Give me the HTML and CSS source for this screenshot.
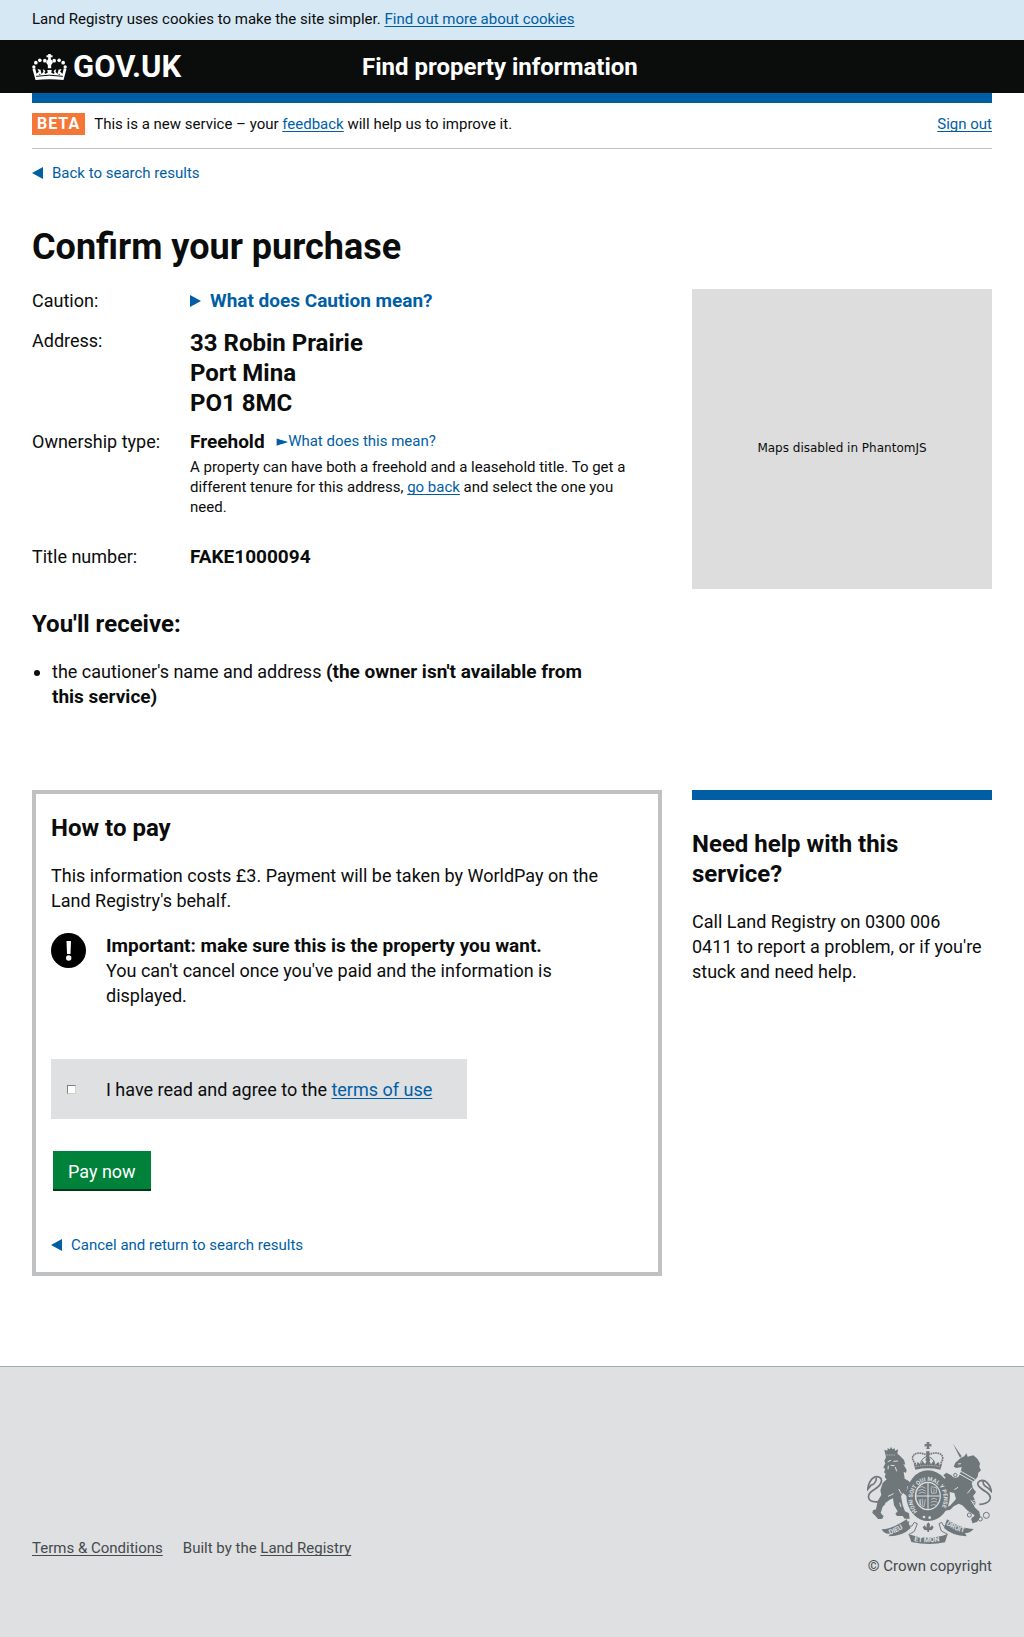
FILE: index.html
```html
<!DOCTYPE html>
<html lang="en">
<head>
<meta charset="utf-8">
<meta name="viewport" content="width=device-width, initial-scale=1">
<title>Confirm your purchase</title>
<link rel="stylesheet" href="styles.css">
</head>
<body>
<div class="cookie-bar">
  <p class="wrap">Land Registry uses cookies to make the site simpler. <a href="#cookies">Find out more about cookies</a></p>
</div>

<header class="site-header">
  <div class="wrap site-header-inner">
    <a class="logo" href="#home">
      <svg class="crown" viewBox="96 158 104 78" aria-hidden="true">
        <g fill="#fff">
          <path d="M144 158h8v4h5v6h-5v6q6 4 6 10l-5 7v10h-10v-10l-5-7q0-6 6-10v-6h-5v-6h5z"/>
          <circle cx="134" cy="178" r="5.500"/><circle cx="162" cy="178" r="5.500"/>
          <circle cx="119" cy="177" r="5.500"/><circle cx="177" cy="177" r="5.500"/>
          <circle cx="107" cy="184" r="5.500"/><circle cx="189" cy="184" r="5.500"/>
          <circle cx="101" cy="197" r="5"/><circle cx="195" cy="197" r="5"/>
          <path d="M97 203l8-2 4 16 7-6-4-8 9 2 3 13 6-7-2-7 5 2 5 10 5-2-2-8h14l-2 8 5 2 5-10 5-2-2 7 6 7 3-13 9-2-4 8 7 6 4-16 8 2-9 33q-42-5-84 0z"/>
        </g>
        <path d="M108 225q40-7 80 0" fill="none" stroke="#0b0c0c" stroke-width="3"/>
        <g fill="#0b0c0c"><circle cx="136" cy="214" r="3"/><circle cx="160" cy="214" r="3"/><circle cx="119" cy="219" r="2"/><circle cx="177" cy="219" r="2"/></g>
      </svg>
      <span>GOV.UK</span>
    </a>
    <a class="service-name" href="#service">Find property information</a>
  </div>
</header>

<main class="wrap">
  <div class="phase-banner">
    <p class="phase-text"><strong class="phase-tag">BETA</strong><span>This is a new service – your <a href="#feedback">feedback</a> will help us to improve it.</span></p>
    <a href="#signout">Sign out</a>
  </div>

  <a class="back-link" href="#results">Back to search results</a>

  <h1 class="title">Confirm your purchase</h1>

  <div class="columns">
    <div class="summary-column">
      <dl class="summary">
        <dt>Caution:</dt>
        <dd>
          <details>
            <summary class="caution-toggle">What does Caution mean?</summary>
          </details>
        </dd>
        <dt>Address:</dt>
        <dd class="address">33 Robin Prairie<br>Port Mina<br>PO1 8MC</dd>
        <dt>Ownership type:</dt>
        <dd>
          <div class="tenure">
            <strong>Freehold</strong>
            <details>
              <summary class="tenure-toggle"><span class="pointer">►</span>What does this mean?</summary>
            </details>
          </div>
          <p class="tenure-note">A property can have both a freehold and a leasehold title. To get a different tenure for this address, <a href="#back">go back</a> and select the one you need.</p>
        </dd>
        <dt>Title number:</dt>
        <dd><strong>FAKE1000094</strong></dd>
      </dl>

      <h2 class="heading">You'll receive:</h2>
      <ul class="receive">
        <li>the cautioner's name and address <strong>(the owner isn't available from this service)</strong></li>
      </ul>
    </div>
    <div class="map">Maps disabled in PhantomJS</div>
  </div>

  <div class="columns">
    <form class="payment">
      <h2 class="heading">How to pay</h2>
      <p class="cost">This information costs £3. Payment will be taken by WorldPay on the Land Registry's behalf.</p>
      <div class="notice">
        <svg class="notice-icon" viewBox="0 0 35 35" role="img" aria-label="Warning">
          <circle cx="17.500" cy="17.500" r="17.500" fill="#000"/>
          <path d="M15.500 8h4.500l-.5 13h-3.500z" fill="#fff"/>
          <circle cx="17.700" cy="25" r="2.700" fill="#fff"/>
        </svg>
        <p><strong>Important: make sure this is the property you want.</strong><br>You can't cancel once you've paid and the information is displayed.</p>
      </div>
      <div class="agree">
        <input class="agree-box" type="checkbox" id="terms">
        <label for="terms">I have read and agree to the <a href="#terms-of-use">terms of use</a></label>
      </div>
      <button class="pay" type="submit">Pay now</button>
      <a class="back-link" href="#results">Cancel and return to search results</a>
    </form>
    <aside class="help">
      <h2 class="heading">Need help with this service?</h2>
      <p class="help-text">Call Land Registry on 0300 006 0411 to report a problem, or if you're stuck and need help.</p>
    </aside>
  </div>
</main>

<footer class="site-footer">
  <div class="wrap site-footer-inner">
    <ul class="footer-links">
      <li><a href="#conditions">Terms &amp; Conditions</a></li>
      <li>Built by the <a href="#land-registry">Land Registry</a></li>
    </ul>
    <a class="copyright" href="#copyright">
      <svg class="crest" viewBox="51 36 375 306" aria-hidden="true">
        <defs>
          <path id="garter" d="M208 250A47 53 0 1 1 261 250"/>
          <path id="ribbon-left" d="M119 314Q147 306 176 283"/>
          <path id="ribbon-mid" d="M192 333Q233 342 284 331"/>
          <path id="ribbon-right" d="M288 283Q316 305 356 310"/>
        </defs>
        <g fill="#6f777b">
          <!-- crown -->
          <path d="M229 36h10l-2 7 7-2v9l-7-2 2 9h-10l2-9-7 2v-9l7 2z"/>
          <path d="M196 119l-5-19 9 5 3-10 9 9 5-12 8 10 9-14 9 14 8-10 5 12 9-9 3 10 9-5-6 19q-37-8-75 0z"/>
          <path d="M228 64h11l-2 16 4 10-7 10-8-10 4-10z"/>
          <!-- lion -->
          <path d="M108 82l-5-23 9 3 1-7 7 3 3-8 4 8 7-3 1 7 9-4-3 22z"/>
          <path d="M107 84l-4 9 3 7-6 13 6 4-4 10 5 4-3 10 6 7-12 11-7 22 3 14-11 18-5 25-9 3-2 8 9 8 8 10h12l5-8-9-10 6-19 20-20 11-5 3 21 11 18-7 7 5 7h17l6 8h15l-2-16-12-6-7-19-5-26 6-10 15 12 7-10-11-9 2-14 12 6 3-8-11-13-12-7-3-20 7 2 2-8-10-17 6 1-4-14-14-14-13-10-14-2z"/>
          <!-- unicorn -->
          <path d="M309 41l26 38-5 4z"/>
          <path d="M332 84l11-5 6-9 4 10 17-4 12 10 8 14-2 11 5 10-8 7-2 12-8 10-10 9 4 16 9 11-8 13 7 18-4 14 15 14 3 16-10 15-14 4-2-12 9-12-21-14-16-16-11-5-15 8-10 10-16 3 3-10 12-5 18-20-5-18-14-3-14 4-8-10 9-7-12-9 1-12 12-9-7-7 9-8 15 8 8 9 13-4 7-14 3-16-16 3-8-4 5-12z"/>
          <!-- shield belt -->
          <path fill-rule="evenodd" d="M234 121a61 71 0 1 0 1 152a61 71 0 1 0-1-152zm0 34a39 43 0 1 1-1 86a39 43 0 1 1 1-86z"/>
          <ellipse cx="234" cy="198" rx="35" ry="39"/>
          <!-- ribbon -->
          <path d="M95 298q30 0 75-30l12 26q-24 25-66 25l5-8q-18 3-26-13z"/>
          <path d="M291 268q38 27 80 29-12 14-26 12l5 10q-46-3-68-25z"/>
          <path d="M176 313q57 21 117-1l-8 25q-48 10-101-1z"/>
          <path d="M230 283l5-6 5 6-1 10 7-7 5 6-5 8-9 1v5h-5v-5l-9-1-5-8 6-6 6 7z"/>
        </g>
        <g fill="none" stroke="#6f777b">
          <path d="M197 102C173 77 200 59 232 76C266 58 292 77 270 102" stroke-width="5" stroke-dasharray="5 2"/>
          <path d="M212 106q-3-18 20-28 25 10 22 28" stroke-width="3"/>
          <path d="M88 215C47 220 49 192 72 179C95 166 100 148 88 142C74 134 57 149 53 178L64 165C76 163 80 148 78 144" stroke-width="5"/>
          <path d="M388 223C421 222 431 201 409 186C389 174 375 162 389 153C405 146 421 162 424 184L414 174C402 169 399 159 399 154" stroke-width="5"/>
          <path d="M177 274q-9 18 9 14l7-11 9 4-9 23q-14 8-17 10M292 274q8 18-11 14l-6-11-8 4 7 22q15 8 19 10" stroke-width="3"/>
          <circle cx="358" cy="255" r="6" stroke-width="3"/><circle cx="371" cy="268" r="6" stroke-width="3"/><circle cx="391" cy="267" r="6" stroke-width="3"/><circle cx="409" cy="256" r="9" stroke-width="3"/><circle cx="311" cy="148" r="5" stroke-width="3"/><circle cx="316" cy="135" r="5" stroke-width="3"/>
        </g>
        <g fill="none" stroke="#dee0e2">
          <path d="M234 158v80M199 198h70" stroke-width="3"/>
          <path d="M205 173q11-8 22 2M205 182q12-8 22 1M206 190q12-7 21 0M243 170l16 3v16l-14 1-2-17M250 176q6 5 0 11M207 208l4 18 11 4 4-22M212 207v18M218 206v20M243 208q10-7 18 1M242 217q10-7 20 0M242 227q9-7 16-1" stroke-width="2"/>
          <path d="M196 110q37-8 74 0" stroke-width="2" stroke-dasharray="4 3"/>
          <path d="M113 95l10-4M130 94l14-1M122 106l12 1M115 107l-1 11M136 111l4 13M114 199l17-8M105 221l14-9M146 177l9 16M149 218l4 13M325 130l47 26M331 123l45 26M324 102l9-1M366 173l-14 17M363 211l12 18M324 172l-11 7" stroke-width="3"/>
          <circle cx="375" cy="198" r="4" stroke-width="2"/><circle cx="372" cy="215" r="4" stroke-width="2"/>
          <path d="M107 75h30" stroke-width="2" stroke-dasharray="3 2"/>
        </g>
        <g fill="#dee0e2">
          <circle cx="222" cy="261" r="4"/><circle cx="239" cy="263" r="4"/>
          <text class="motto motto-garter"><textPath href="#garter" startOffset="3%">HONI SOIT QUI MAL Y PENSE</textPath></text>
          <text class="motto"><textPath href="#ribbon-left">DIEU</textPath></text>
          <text class="motto"><textPath href="#ribbon-mid">ET MON</textPath></text>
          <text class="motto"><textPath href="#ribbon-right">DROIT</textPath></text>
        </g>
      </svg>
      <span>© Crown copyright</span>
    </a>
  </div>
</footer>
</body>
</html>
```
FILE: styles.css
```css
* {
  box-sizing: border-box;
}

body {
  margin: 0;
  background: #fff;
  color: #0b0c0c;
  font: 18px/25px Roboto, "Noto Sans", sans-serif;
}

p,
h1,
h2,
ul,
dl,
dd {
  margin: 0;
  padding: 0;
}

strong {
  font-size: 19px;
  line-height: 22px;
}

a {
  color: #005ea5;
  text-underline-offset: 2px;
  text-decoration-skip-ink: none;
}

.wrap {
  max-width: 1024px;
  margin: 0 auto;
  padding: 0 32px;
}

/* Cookie bar and header */

.cookie-bar {
  padding: 9px 0 11px;
  background: #d5e8f3;
  font-size: 15px;
  line-height: 20px;
}

.site-header {
  background: #0b0c0c;
}

.site-header-inner {
  display: grid;
  grid-template-columns: 1fr 2fr;
  column-gap: 15px;
  align-items: center;
  height: 53px;
}

.site-header a {
  color: #fff;
  font-weight: 700;
  text-decoration: none;
}

.logo {
  display: flex;
  align-items: center;
  gap: 6px;
  font-size: 31px;
  line-height: 30px;
}

.crown {
  width: 35px;
  height: 26px;
}

.service-name {
  font-size: 24px;
  line-height: 30px;
}

/* Phase banner */

.phase-banner {
  display: flex;
  justify-content: space-between;
  align-items: center;
  padding: 10px 0 13px;
  border-top: 10px solid #005ea5;
  border-bottom: 1px solid #bfc1c3;
  font-size: 15px;
  line-height: 22px;
}

.phase-text {
  display: flex;
  gap: 9px;
}

.phase-tag {
  padding: 0 5px;
  background: #f47738;
  color: #fff;
  font-size: 16px;
  letter-spacing: 1px;
}

/* Links with a triangle */

.back-link {
  display: flex;
  align-items: center;
  gap: 9px;
  font-size: 15px;
  line-height: 20px;
  text-decoration: none;
}

.back-link::before {
  content: "";
  border: solid transparent;
  border-width: 6px 11px 6px 0;
  border-right-color: #005ea5;
}

main > .back-link {
  margin-top: 14px;
}

summary {
  display: flex;
  align-items: center;
  color: #005ea5;
  cursor: pointer;
  list-style: none;
}

.caution-toggle {
  gap: 9px;
  margin-bottom: 4px;
  font-size: 19px;
  font-weight: 700;
}

.caution-toggle::before {
  content: "";
  border: solid transparent;
  border-width: 6px 0 6px 11px;
  border-left-color: #005ea5;
}

.tenure-toggle {
  font-size: 15px;
}

.pointer {
  font-family: "DejaVu Sans", sans-serif;
}

/* Purchase summary */

.title {
  margin: 44px 0 22px;
  font-size: 36px;
  line-height: 40px;
}

.columns {
  display: grid;
  grid-template-columns: minmax(0, 1fr) 300px;
  align-items: start;
  gap: 30px;
}

.summary {
  display: grid;
  grid-template-columns: 158px 1fr;
  row-gap: 11px;
  max-width: 616px;
  margin-top: -1px;
}

.address {
  font-size: 24px;
  font-weight: 700;
  line-height: 30px;
}

.tenure {
  display: flex;
  align-items: center;
  gap: 12px;
}

.tenure-note {
  margin: 3px 0 16px;
  font-size: 15px;
  line-height: 20px;
}

.heading {
  font-size: 24px;
  line-height: 30px;
}

.summary-column .heading {
  margin: 40px 0 20px;
}

.receive {
  max-width: 580px;
  padding-left: 20px;
}

.map {
  display: grid;
  place-items: center;
  height: 300px;
  padding-top: 19px;
  background: #ddd;
  font: 12px/15px "DejaVu Sans", sans-serif;
}

/* Payment */

main > .columns + .columns {
  margin-top: 81px;
}

.payment {
  display: flex;
  flex-direction: column;
  align-items: flex-start;
  gap: 20px;
  padding: 19px 15px 17px;
  border: 4px solid #bfc1c3;
}

.cost {
  max-width: 580px;
}

.notice {
  display: flex;
  gap: 20px;
  max-width: 530px;
}

.notice-icon {
  flex: none;
  width: 35px;
  height: 35px;
}

.agree {
  display: flex;
  align-items: center;
  gap: 30px;
  margin-top: 31px;
  padding: 18px 35px 17px 16px;
  background: #dee0e2;
}

.agree-box {
  appearance: none;
  width: 9px;
  height: 9px;
  margin: 0;
  border: 1px solid;
  border-color: #808080 #d4d0c8 #d4d0c8 #808080;
  background: #fff;
}

.pay {
  margin: 12px 2px 24px;
  padding: 8px 15px 5px;
  border: 0;
  border-bottom: 2px solid #003618;
  background: #00823b;
  color: #fff;
  font: inherit;
}

.help {
  padding-top: 29px;
  border-top: 10px solid #005ea5;
}

.help .heading {
  margin-bottom: 20px;
}

.help-text {
  max-width: 290px;
}

/* Footer */

.site-footer {
  margin-top: 90px;
  padding: 75px 0 61px;
  border-top: 1px solid #a1acb2;
  background: #dee0e2;
  color: #454a4c;
  font-size: 15px;
  line-height: 20px;
}

.site-footer a {
  color: inherit;
}

.site-footer-inner {
  display: flex;
  justify-content: space-between;
  align-items: flex-end;
}

.footer-links {
  display: flex;
  gap: 20px;
  padding-bottom: 18px;
  list-style: none;
}

.copyright {
  display: flex;
  flex-direction: column;
  align-items: flex-end;
  gap: 12px;
  text-decoration: none;
}

.crest {
  width: 125px;
  height: 102px;
}

.motto {
  font-size: 21px;
  font-weight: 700;
}

.motto-garter {
  font-size: 17px;
}
```
